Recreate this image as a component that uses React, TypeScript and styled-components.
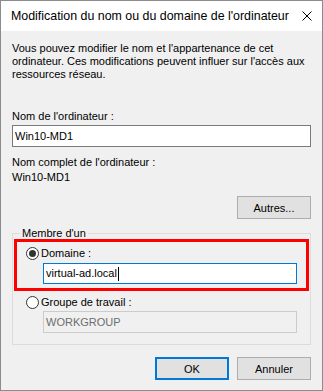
import styled, { createGlobalStyle } from "styled-components";

const GlobalStyle = createGlobalStyle`
  html, body {
    margin: 0;
    padding: 0;
    background: #ffffff;
  }
  body {
    font-family: "Liberation Sans", Arial, sans-serif;
    font-size: 11px;
    color: #000;
  }
`;

const Window = styled.div`
  width: 323px;
  height: 391px;
  box-sizing: border-box;
  border: 1px solid #8c8c8c;
  background: #f0f0f0;
  display: flex;
  flex-direction: column;
`;

const TitleBar = styled.div`
  height: 30px;
  flex-shrink: 0;
  background: #ffffff;
  display: flex;
  align-items: center;
  justify-content: space-between;
  padding: 0 10px;
  font-family: "Liberation Sans", Arial, sans-serif;
  font-size: 12.4px;
  white-space: nowrap;
`;

const Close = styled.svg`
  width: 10px;
  height: 10px;
  display: block;
  flex-shrink: 0;
`;

const Body = styled.div`
  padding: 11px 11px 0 11px;
  display: flex;
  flex-direction: column;
`;

const Text = styled.p<{ $top?: number }>`
  margin: ${(p) => p.$top ?? 0}px 0 0 0;
  line-height: 13px;
`;

type Variant = "normal" | "focus" | "disabled";

const Field = styled.div<{ $variant?: Variant; $h?: number; $w?: number; $top?: number; $left?: number }>`
  box-sizing: border-box;
  width: ${(p) => (p.$w ? `${p.$w}px` : "auto")};
  height: ${(p) => p.$h ?? 22}px;
  margin: ${(p) => p.$top ?? 0}px 0 0 ${(p) => p.$left ?? 0}px;
  padding-left: 2px;
  display: flex;
  align-items: center;
  line-height: 13px;
  border: 1px solid
    ${(p) =>
      p.$variant === "focus" ? "#0078d7" : p.$variant === "disabled" ? "#cccccc" : "#7a7a7a"};
  background: ${(p) => (p.$variant === "disabled" ? "#f0f0f0" : "#ffffff")};
  color: ${(p) => (p.$variant === "disabled" ? "#6d6d6d" : "#000")};
`;

const Caret = styled.span`
  display: inline-block;
  width: 1px;
  height: 14px;
  background: #000;
  margin-left: 1px;
`;

const Button = styled.button<{ $default?: boolean }>`
  box-sizing: border-box;
  width: 74px;
  height: 23px;
  padding: 0;
  font-family: "Liberation Sans", Arial, sans-serif;
  font-size: 11px;
  color: #000;
  background: #e1e1e1;
  border: ${(p) => (p.$default ? "2px solid #0078d7" : "1px solid #adadad")};
  border-radius: 0;
`;

const RightRow = styled.div<{ $top: number }>`
  display: flex;
  justify-content: flex-end;
  gap: 8px;
  margin-top: ${(p) => p.$top}px;
`;

const Group = styled.fieldset`
  margin: 8px 0 0 0;
  padding: 0 1px 11px 1px;
  border: 1px solid #dcdcdc;
  min-width: 0;
`;

const Legend = styled.legend`
  margin-left: 6px;
  padding: 0 2px;
  line-height: 13px;
`;

const Highlight = styled.div`
  margin-top: -1px;
  border: 3px solid #ff0000;
  padding: 5px 0 4px 0;
  display: flex;
  flex-direction: column;
`;

const RadioRow = styled.label<{ $left: number; $top?: number }>`
  display: flex;
  align-items: center;
  gap: 2px;
  height: 13px;
  line-height: 13px;
  margin: ${(p) => p.$top ?? 0}px 0 0 ${(p) => p.$left}px;
`;

const Radio = styled.span<{ $checked?: boolean }>`
  box-sizing: border-box;
  width: 13px;
  height: 13px;
  border-radius: 50%;
  border: 1px solid #333333;
  background: #ffffff;
  display: flex;
  align-items: center;
  justify-content: center;
  &::after {
    content: "";
    width: 7px;
    height: 7px;
    border-radius: 50%;
    background: ${(p) => (p.$checked ? "#333333" : "transparent")};
  }
`;

export default function App() {
  return (
    <>
      <GlobalStyle />
      <Window>
        <TitleBar>
          <span>Modification du nom ou du domaine de l'ordinateur</span>
          <Close viewBox="0 0 10 10">
            <path d="M0.5 0.5 L9.5 9.5 M9.5 0.5 L0.5 9.5" stroke="#000" strokeWidth="1" fill="none" />
          </Close>
        </TitleBar>
        <Body>
          <Text>
            Vous pouvez modifier le nom et l'appartenance de cet
            <br />
            ordinateur. Ces modifications peuvent influer sur l'accès aux
            <br />
            ressources réseau.
          </Text>
          <Text $top={29}>Nom de l'ordinateur :</Text>
          <Field $top={2}>Win10-MD1</Field>
          <Text $top={9}>Nom complet de l'ordinateur :</Text>
          <Text $top={2}>Win10-MD1</Text>
          <RightRow $top={12}>
            <Button>Autres...</Button>
          </RightRow>
          <Group>
            <Legend>Membre d'un</Legend>
            <Highlight>
              <RadioRow $left={9}>
                <Radio $checked />
                Domaine :
              </RadioRow>
              <Field $variant="focus" $h={21} $w={254} $top={3} $left={26}>
                virtual-ad.local
                <Caret />
              </Field>
            </Highlight>
            <RadioRow $left={12} $top={5}>
              <Radio />
              Groupe de travail :
            </RadioRow>
            <Field $variant="disabled" $w={254} $top={2} $left={29}>
              WORKGROUP
            </Field>
          </Group>
          <RightRow $top={12}>
            <Button $default>OK</Button>
            <Button>Annuler</Button>
          </RightRow>
        </Body>
      </Window>
    </>
  );
}
